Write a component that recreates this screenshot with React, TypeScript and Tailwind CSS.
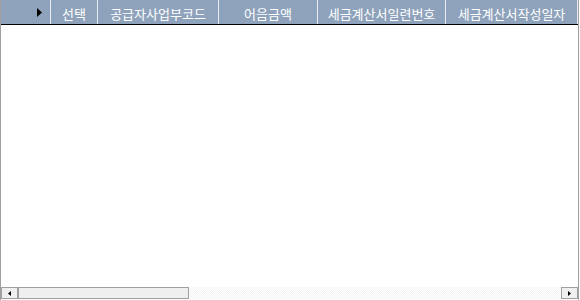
const columns = [
  { label: '선택', w: 'w-[47px]' },
  { label: '공급자사업부코드', w: 'w-[121px]' },
  { label: '어음금액', w: 'w-[99px]' },
  { label: '세금계산서일련번호', w: 'w-[128px]' },
  { label: '세금계산서작성일자', w: 'flex-1' },
];

export default function App() {
  return (
    <div className="w-[580px] h-[300px] bg-white overflow-hidden" style={{ fontFamily: '"Noto Sans CJK KR", "Noto Sans", sans-serif' }}>
      <div className="w-[579px] h-[300px] flex flex-col border-l border-[#a0a0a0] border-r border-r-[#a0a0a0]">
        {/* header */}
        <div className="flex h-[25px] bg-[#8ea3bb] border-b border-black text-white text-[13px]">
          <div className="w-[50px] flex items-center justify-end pr-[8px] border-r border-[#e8ecf0]">
            <svg width="5" height="9" viewBox="0 0 5 9">
              <path d="M0 0 L5 4.5 L0 9 Z" fill="#000" />
            </svg>
          </div>
          {columns.map((c) => (
            <div key={c.label} className={`${c.w} flex items-center justify-center pt-[2px] border-r border-[#e8ecf0] whitespace-nowrap overflow-hidden leading-none`}>
              {c.label}
            </div>
          ))}
        </div>
        {/* body */}
        <div className="flex-1" />
        {/* horizontal scrollbar */}
        <div className="flex h-[12px] mb-[1px]">
          <div className="w-[17px] h-[12px] bg-[#efefef] border border-[#a0a0a0] flex items-center justify-center">
            <svg width="3" height="5" viewBox="0 0 3 5">
              <path d="M3 0 L0 2.5 L3 5 Z" fill="#000" />
            </svg>
          </div>
          <div className="w-[171px] h-[12px] bg-[#efefef] border border-[#a0a0a0]" />
          <div className="flex-1 h-[12px] bg-[repeating-conic-gradient(#f4f4f4_0%_25%,#ffffff_0%_50%)] bg-[length:2px_2px]" />
          <div className="w-[17px] h-[12px] bg-[#efefef] border border-[#a0a0a0] flex items-center justify-center">
            <svg width="3" height="5" viewBox="0 0 3 5">
              <path d="M0 0 L3 2.5 L0 5 Z" fill="#000" />
            </svg>
          </div>
        </div>
      </div>
    </div>
  );
}
